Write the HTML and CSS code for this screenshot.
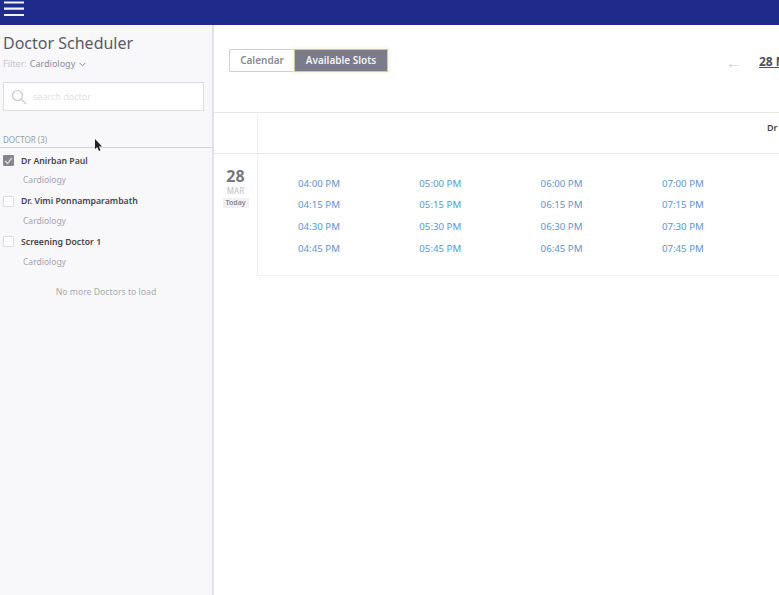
FILE: index.html
```html
<!DOCTYPE html>
<html lang="en">
<head>
<meta charset="utf-8">
<title>Doctor Scheduler</title>
<link rel="stylesheet" href="styles.css">
</head>
<body>
<header class="topbar">
  <svg class="menu-icon" width="20" height="17" viewBox="0 0 20 17"><path d="M0 2.5h20M0 8.7h20M0 15h20" stroke="#f2f3fa" stroke-width="2.2"/></svg>
</header>
<div class="app">
  <aside class="sidebar">
    <div class="side-head">
      <h1 class="title">Doctor Scheduler</h1>
      <div class="filter"><span class="filter-label">Filter:</span> <span class="filter-value">Cardiology</span>
        <svg class="chevron" width="7" height="5" viewBox="0 0 7 5"><path d="M.5.8l3 3 3-3" fill="none" stroke="#8a8b98" stroke-width="1"/></svg>
      </div>
      <div class="search">
        <svg width="16" height="16" viewBox="0 0 16 16"><circle cx="6.5" cy="6.5" r="5" fill="none" stroke="#c6c7cd" stroke-width="1.2"/><path d="M10.2 10.2l5 5" stroke="#c6c7cd" stroke-width="1.2"/></svg>
        <span class="search-text">search doctor</span>
      </div>
      <div class="section-label">DOCTOR (3)</div>
    </div>
    <ul class="doctors">
      <li class="doctor">
        <div class="doctor-row"><span class="check checked"><svg width="9" height="8" viewBox="0 0 9 8"><path d="M1 4l2.5 2.5L8 1" fill="none" stroke="#d8d8de" stroke-width="1.3"/></svg></span><span class="doctor-name">Dr Anirban Paul</span></div>
        <div class="doctor-spec">Cardiology</div>
      </li>
      <li class="doctor">
        <div class="doctor-row"><span class="check"></span><span class="doctor-name">Dr. Vimi Ponnamparambath</span></div>
        <div class="doctor-spec">Cardiology</div>
      </li>
      <li class="doctor">
        <div class="doctor-row"><span class="check"></span><span class="doctor-name">Screening Doctor 1</span></div>
        <div class="doctor-spec">Cardiology</div>
      </li>
    </ul>
    <div class="no-more">No more Doctors to load</div>
    <svg class="cursor" width="9" height="13" viewBox="0 0 9 13"><path d="M1 0v10l2.3-2 1.6 4 1.6-.7-1.6-3.7H8z" fill="#222"/></svg>
  </aside>
  <main class="main">
    <div class="toolbar">
      <div class="toggle">
        <span class="toggle-btn">Calendar</span>
        <span class="toggle-btn active">Available Slots</span>
      </div>
      <div class="date-nav">
        <span class="arrow">←</span>
        <span class="date-link">28 Mar 2019</span>
      </div>
    </div>
    <div class="grid-head">
      <div class="head-spacer"></div>
      <div class="head-doctor">Dr Anirban Paul</div>
    </div>
    <div class="grid-body">
      <div class="date-cell">
        <div class="day">28</div>
        <div class="month">MAR</div>
        <div class="today">Today</div>
      </div>
      <div class="slots">
        <a class="slot">04:00 PM</a><a class="slot">05:00 PM</a><a class="slot">06:00 PM</a><a class="slot">07:00 PM</a>
        <a class="slot">04:15 PM</a><a class="slot">05:15 PM</a><a class="slot">06:15 PM</a><a class="slot">07:15 PM</a>
        <a class="slot">04:30 PM</a><a class="slot">05:30 PM</a><a class="slot">06:30 PM</a><a class="slot">07:30 PM</a>
        <a class="slot">04:45 PM</a><a class="slot">05:45 PM</a><a class="slot">06:45 PM</a><a class="slot">07:45 PM</a>
      </div>
    </div>
  </main>
</div>
</body>
</html>
```
FILE: styles.css
```css
* { box-sizing: border-box; }
html, body { margin: 0; height: 100%; overflow: hidden; }
body { width: 779px; height: 595px; background: #fff; font-family: "Noto Sans", "Open Sans", sans-serif; color: #55565f; display: flex; flex-direction: column; }
.topbar { height: 25px; flex: none; background: #1f2b8b; position: relative; overflow: hidden; }
.menu-icon { display: block; margin: 0 0 0 3.5px; }
.app { flex: 1; display: flex; min-height: 0; }
.sidebar { width: 214px; flex: none; background: #f8f8fb; border-right: 2px solid #e2e2ea; position: relative; }
.side-head { height: 123px; padding: 8px 9px 0 3px; border-bottom: 1px solid #d4d4d8; margin-right: -1px; }
.title { margin: 0; font-size: 16px; line-height: 20px; font-weight: 400; color: #5a5b66; }
.filter { margin-top: 5px; font-size: 9px; line-height: 12px; display: flex; align-items: center; gap: 3px; }
.filter-label { color: #c3c4cb; }
.filter-value { color: #8a8b98; }
.chevron { margin-left: 1px; }
.search { margin-top: 12px; height: 29px; background: #fff; border: 1px solid #dcdce0; display: flex; align-items: center; padding: 0 0 0 7px; gap: 6px; width: 201px; }
.search-text { font-size: 9px; color: #dfdfe3; }
.section-label { margin-top: 23px; font-size: 8px; line-height: 11px; color: #9a9ba3; }
.doctors { list-style: none; margin: 0; padding: 0; }
.doctor { height: 40.6px; padding: 6px 0 0 3px; }
.doctor-row { display: flex; align-items: center; gap: 7px; height: 13px; }
.check { width: 11px; height: 11px; background: #fff; border: 1px solid #dcdce0; border-radius: 1px; display: flex; align-items: center; justify-content: center; flex: none; }
.check.checked { background: #85868f; border-color: #85868f; }
.doctor-name { font-size: 8.7px; font-weight: 600; color: #44454d; white-space: nowrap; }
.doctor-spec { margin: 7.4px 0 0 20px; font-size: 8.5px; line-height: 11px; color: #a3a4ac; }
.no-more { margin-top: 16px; text-align: center; font-size: 8.7px; line-height: 12px; color: #a9aab1; }
.cursor { position: absolute; left: 94px; top: 114px; }
.main { flex: 1; min-width: 0; overflow: hidden; }
.toolbar { height: 87px; padding: 24px 0 0 15px; position: relative; }
.toggle { display: flex; width: 159px; height: 23px; }
.toggle-btn { font-size: 10px; font-weight: 600; line-height: 20px; color: #8a8b93; background: #fff; border: 1px solid #cfcfd4; border-right: 0; border-radius: 2px 0 0 2px; width: 65px; text-align: center; white-space: nowrap; }
.toggle-btn.active { width: 94px; color: #f3f3f6; background: #7b7b8c; border: 1px solid #c9cb9f; border-radius: 0; box-shadow: 0 0 3px 1px #f3f4d6; }
.date-nav { position: absolute; left: 512px; top: 29px; display: flex; align-items: center; gap: 18px; white-space: nowrap; }
.arrow { font-size: 15px; line-height: 14px; color: #c6c7cd; }
.date-link { font-size: 12px; font-weight: 700; line-height: 15px; color: #4d4e57; text-decoration: underline; }
.grid-head { display: flex; height: 42px; border-top: 1px solid #e8e8ec; border-bottom: 1px solid #e8e8ec; }
.head-spacer { width: 44px; flex: none; border-right: 1px solid #eeeef1; }
.head-doctor { margin-left: 509px; padding-top: 8px; font-size: 9px; font-weight: 600; color: #44454d; white-space: nowrap; }
.grid-body { display: flex; height: 122px; }
.date-cell { width: 44px; flex: none; border-right: 1px solid #eeeef1; text-align: center; padding-top: 13px; }
.day { font-size: 16px; font-weight: 700; line-height: 18px; color: #75767f; }
.month { font-size: 8px; line-height: 10px; color: #bcbdc4; margin-top: 1px; }
.today { display: block; width: 26px; margin: 2px auto 0; font-size: 7px; line-height: 10px; font-weight: 600; color: #85868f; background: #f1f1f3; }
.slots { flex: 1; display: grid; grid-template-columns: repeat(4, 121.3px); grid-auto-rows: 21.7px; padding: 18.6px 0 0 40px; border-bottom: 1px solid #eeeef1; }
.slot { font-size: 9.7px; line-height: 21px; color: #5b95d2; white-space: nowrap; }
```
